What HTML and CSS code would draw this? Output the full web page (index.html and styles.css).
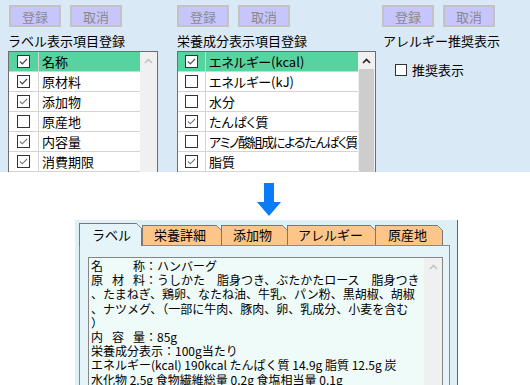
FILE: index.html
```html
<!DOCTYPE html>
<html lang="ja">
<head>
<meta charset="utf-8">
<title>登録</title>
<link rel="stylesheet" href="styles.css">
</head>
<body>
<div class="top">
  <section class="group g1">
    <div class="btns"><button class="btn">登録</button><button class="btn">取消</button></div>
    <div class="title">ラベル表示項目登録</div>
    <div class="list l1">
      <div class="rows">
        <div class="row sel"><span class="cbcell"><span class="cb"><svg width="11" height="11" viewBox="0 0 11 11"><path d="M2 5.5 4.3 7.8 9 3" fill="none" stroke="#444" stroke-width="1.2"/></svg></span></span><span class="txt">名称</span></div>
        <div class="row"><span class="cbcell"><span class="cb"><svg width="11" height="11" viewBox="0 0 11 11"><path d="M2 5.5 4.3 7.8 9 3" fill="none" stroke="#444" stroke-width="1.2"/></svg></span></span><span class="txt">原材料</span></div>
        <div class="row"><span class="cbcell"><span class="cb"><svg width="11" height="11" viewBox="0 0 11 11"><path d="M2 5.5 4.3 7.8 9 3" fill="none" stroke="#777" stroke-width="1.1"/></svg></span></span><span class="txt">添加物</span></div>
        <div class="row"><span class="cbcell"><span class="cb"></span></span><span class="txt">原産地</span></div>
        <div class="row"><span class="cbcell"><span class="cb"><svg width="11" height="11" viewBox="0 0 11 11"><path d="M2 5.5 4.3 7.8 9 3" fill="none" stroke="#777" stroke-width="1.1"/></svg></span></span><span class="txt">内容量</span></div>
        <div class="row"><span class="cbcell"><span class="cb"><svg width="11" height="11" viewBox="0 0 11 11"><path d="M2 5.5 4.3 7.8 9 3" fill="none" stroke="#777" stroke-width="1.1"/></svg></span></span><span class="txt">消費期限</span></div>
      </div>
      <div class="sb">
        <span class="up"><svg width="9" height="6" viewBox="0 0 9 6"><path d="M1 5 4.5 1.5 8 5" fill="none" stroke="#c4c4c4" stroke-width="1.6"/></svg></span>
      </div>
    </div>
  </section>

  <section class="group g2">
    <div class="btns"><button class="btn">登録</button><button class="btn">取消</button></div>
    <div class="title">栄養成分表示項目登録</div>
    <div class="list l2">
      <div class="rows">
        <div class="row sel"><span class="cbcell"><span class="cb"><svg width="11" height="11" viewBox="0 0 11 11"><path d="M2 5.5 4.3 7.8 9 3" fill="none" stroke="#555" stroke-width="1.2"/></svg></span></span><span class="txt">エネルギー(kcal)</span></div>
        <div class="row"><span class="cbcell"><span class="cb"></span></span><span class="txt">エネルギー(kJ)</span></div>
        <div class="row"><span class="cbcell"><span class="cb"></span></span><span class="txt">水分</span></div>
        <div class="row"><span class="cbcell"><span class="cb"><svg width="11" height="11" viewBox="0 0 11 11"><path d="M2 5.5 4.3 7.8 9 3" fill="none" stroke="#777" stroke-width="1.1"/></svg></span></span><span class="txt">たんぱく質</span></div>
        <div class="row"><span class="cbcell"><span class="cb"></span></span><span class="txt tight">アミノ酸組成によるたんぱく質</span></div>
        <div class="row"><span class="cbcell"><span class="cb"><svg width="11" height="11" viewBox="0 0 11 11"><path d="M2 5.5 4.3 7.8 9 3" fill="none" stroke="#777" stroke-width="1.1"/></svg></span></span><span class="txt">脂質</span></div>
      </div>
      <div class="sb">
        <span class="up"><svg width="9" height="6" viewBox="0 0 9 6"><path d="M1 5 4.5 1.5 8 5" fill="none" stroke="#222" stroke-width="1.6"/></svg></span>
        <span class="thumb"></span>
      </div>
    </div>
  </section>

  <section class="group g3">
    <div class="btns"><button class="btn">登録</button><button class="btn">取消</button></div>
    <div class="title">アレルギー推奨表示</div>
    <label class="opt"><span class="cb"></span><span class="opt-text">推奨表示</span></label>
  </section>
</div>

<div class="bottom">
  <svg class="down" width="24" height="33" viewBox="0 0 24 33"><polygon points="7,0 17,0 17,19 24,19 12,33 0,19 7,19" fill="#0b7cf7"/></svg>
  <div class="panel">
    <div class="tabs">
      <div class="tab active t1">ラベル</div>
      <div class="tab t2">栄養詳細</div>
      <div class="tab t3">添加物</div>
      <div class="tab t4">アレルギー</div>
      <div class="tab t5">原産地</div>
    </div>
    <div class="page">
      <div class="ta">
        <div class="text"><span class="sp wide">名</span>称：ハンバーグ
<span class="sp">原</span><span class="sp">材</span>料：うしかた　脂身つき、ぶたかたロース　脂身つき
、たまねぎ、鶏卵、なたね油、牛乳、パン粉、黒胡椒、胡椒
、ナツメグ、（一部に牛肉、豚肉、卵、乳成分、小麦を含む
）
<span class="sp">内</span><span class="sp">容</span>量：85g
栄養成分表示：100g当たり
エネルギー(kcal) 190kcal たんぱく質 14.9g 脂質 12.5g 炭
水化物 2.5g 食物繊維総量 0.2g 食塩相当量 0.1g</div>
        <div class="sb">
          <span class="up"><svg width="9" height="6" viewBox="0 0 9 6"><path d="M1 5 4.5 1.5 8 5" fill="none" stroke="#c4c4c4" stroke-width="1.6"/></svg></span>
        </div>
      </div>
    </div>
  </div>
</div>
</body>
</html>
```

FILE: styles.css
```css
* { box-sizing: border-box; }
html, body { margin: 0; padding: 0; }
body {
  width: 530px;
  height: 385px;
  overflow: hidden;
  font-family: "Noto Sans CJK JP", "Noto Sans", sans-serif;
  font-size: 13px;
  color: #000;
  background: #fff;
}

/* ---------- top settings area ---------- */
.top {
  display: flex;
  align-items: flex-start;
  height: 172px;
  padding: 5px 0 0 8px;
  background: #d9e9f6;
  overflow: hidden;
}
.group { display: flex; flex-direction: column; flex: none; }
.g1 { width: 150px; }
.g2 { width: 199px; margin-left: 19px; }
.g3 { margin-left: 6px; }

.btns { display: flex; gap: 9px; height: 22px; }
.g1 .btns { padding-left: 1px; }
.btn {
  width: 52px;
  height: 22px;
  margin: 0;
  padding: 0;
  border: 2px solid #c3c3c3;
  background: #c6c6fd;
  color: #8a8a8a;
  font: inherit;
  font-size: 13px;
  line-height: 17px;
}

.title { margin-top: 6px; height: 16px; line-height: 16px; white-space: nowrap; }
.g3 .title { padding-left: 1px; }

.list {
  margin-top: 2px;
  height: 130px;
  display: flex;
  border: 1px solid #6e6e6e;
  border-bottom: none;
  background: #fff;
}
.rows { flex: 1; min-width: 0; display: flex; flex-direction: column; }
.row { display: flex; flex: none; height: 20px; border-bottom: 1px solid #d4d4d4; }
.row.sel { background: #57d3a0; }
.cbcell {
  width: 30px;
  flex: none;
  display: flex;
  align-items: center;
  justify-content: center;
  border-right: 1px solid #d4d4d4;
}
.l2 .cbcell { width: 28px; }
.txt {
  padding-left: 3px;
  line-height: 19px;
  white-space: nowrap;
  overflow: hidden;
  font-feature-settings: "palt";
}
.txt.tight { letter-spacing: -1.3px; }

.cb {
  display: block;
  flex: none;
  width: 13px;
  height: 13px;
  border: 1px solid #333;
  background: #fff;
}
.cb svg { display: block; }

.sb { width: 17px; flex: none; background: #f0f0f0; display: flex; flex-direction: column; }
.sb .up { height: 17px; flex: none; display: flex; align-items: center; justify-content: center; }
.sb .thumb { flex: 1; margin: 0 1px; background: #cdcdcd; }

.opt { display: flex; align-items: center; margin: 13px 0 0 13px; height: 16px; line-height: 16px; }
.opt .cb { width: 12px; height: 12px; }
.opt-text { margin-left: 5px; }

/* ---------- bottom preview ---------- */
.bottom { height: 213px; padding-top: 11px; }
.down { display: block; margin-left: 257px; }
.panel {
  margin: 4px 0 0 75px;
  width: 383px;
  height: 165px;
  padding: 3px 0 0 4px;
  background: #dcf0f6;
  border-right: 1px solid #666;
}
.tabs { display: flex; align-items: flex-end; height: 22px; }
.tab {
  position: relative;
  flex: none;
  height: 20px;
  padding-left: 11px;
  border: 1px solid #777;
  border-bottom: none;
  background: #fcc68b;
  line-height: 18px;
  white-space: nowrap;
}
.tab::after {
  content: "";
  position: absolute;
  top: -1px;
  right: -1px;
  width: 6px;
  height: 6px;
  background: linear-gradient(45deg, transparent 0 calc(50% - 0.7px), #888 calc(50% - 0.7px) calc(50% + 0.7px), #dcf0f6 calc(50% + 0.7px));
}
.tab.active {
  height: 23px;
  margin-bottom: -1px;
  padding-left: 12px;
  background: #e4f4f8;
  line-height: 21px;
  z-index: 1;
}
.t1 { width: 63px; }
.t2 { width: 80px; }
.t3 { width: 67px; margin-left: -1px; }
.t4 { width: 89px; margin-left: -1px; padding-left: 10px; }
.t5 { width: 68px; margin-left: -1px; padding-left: 12px; }

.page {
  width: 371px;
  height: 140px;
  padding: 11px 0 0 8px;
  border: 1px solid #8a8a8a;
  border-bottom: none;
  background: #e4f4f8;
}
.ta {
  display: flex;
  width: 355px;
  height: 130px;
  border: 1px solid #858585;
  border-bottom: none;
  background: #effbf8;
}
.text {
  flex: 1;
  min-width: 0;
  padding: 1px 0 0 2px;
  font-size: 12px;
  line-height: 14.2px;
  white-space: pre;
  overflow: hidden;
}
.sp { margin-right: 9px; }
.sp.wide { margin-right: 30px; }
.ta .sb { width: 18px; }
```
